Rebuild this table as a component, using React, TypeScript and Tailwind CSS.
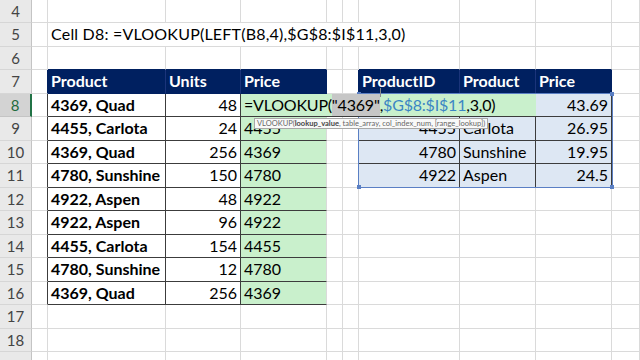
import React from 'react';

// column widths (px): hdr 32 | A 16 | B 118 | C 75 | D 86 | E 16 | F 16 | G 101 | H 76 | I 76 | J rest
const GRID = 'border-r-[#dadada]';
const GRIDB = 'border-b-[#dadada]';
const DARK = 'border-r-[#3c3c3c]';
const DARKB = 'border-b-[#3c3c3c]';

type CellProps = {
  w: string;
  r?: string;
  b?: string;
  bg?: string;
  className?: string;
  children?: React.ReactNode;
};

const Cell: React.FC<CellProps> = ({ w, r = GRID, b = GRIDB, bg = '', className = '', children }) => (
  <div
    className={`${w} ${r} ${b} ${bg} ${className} shrink-0 h-full border-r border-b box-border flex items-center px-[3px] whitespace-nowrap overflow-hidden`}
  >
    {children}
  </div>
);

const RowHead: React.FC<{ n?: number; active?: boolean }> = ({ n, active }) =>
  active ? (
    <div className="w-[32px] shrink-0 h-full box-border border-r-2 border-r-[#217346] border-b border-b-[#c4c4c4] bg-[#d3d3d3] flex items-center justify-center text-[15px] text-[#1f6b3c]">
      {n}
    </div>
  ) : (
    <div className="w-[32px] shrink-0 h-full box-border border-r border-r-[#c4c4c4] border-b border-b-[#d6d6d6] bg-[#e9e9e9] flex items-center justify-center text-[15px] text-[#444]">
      {n}
    </div>
  );

const Row: React.FC<{ h?: string; children: React.ReactNode }> = ({ h = 'h-[23.5px]', children }) => (
  <div className={`${h} flex shrink-0`}>{children}</div>
);

const EmptyRest: React.FC<{ from: 'E' | 'H' }> = ({ from }) => (
  <>
    {from === 'E' && (
      <>
        <Cell w="w-[16px]" />
        <Cell w="w-[16px]" />
        <Cell w="w-[101px]" />
      </>
    )}
    <Cell w="w-[76px]" />
    <Cell w="w-[76px]" />
    <Cell w="flex-1" />
  </>
);

type LeftRow = { n: number; product: string; units: number; price: string };

const leftRows: LeftRow[] = [
  { n: 9, product: '4455, Carlota', units: 24, price: '4455' },
  { n: 10, product: '4369, Quad', units: 256, price: '4369' },
  { n: 11, product: '4780, Sunshine', units: 150, price: '4780' },
  { n: 12, product: '4922, Aspen', units: 48, price: '4922' },
  { n: 13, product: '4922, Aspen', units: 96, price: '4922' },
  { n: 14, product: '4455, Carlota', units: 154, price: '4455' },
  { n: 15, product: '4780, Sunshine', units: 12, price: '4780' },
  { n: 16, product: '4369, Quad', units: 256, price: '4369' },
];

const lookup: Record<number, [string, string, string]> = {
  9: ['4455', 'Carlota', '26.95'],
  10: ['4780', 'Sunshine', '19.95'],
  11: ['4922', 'Aspen', '24.5'],
};

const GREEN = 'bg-[#c9f0cc]';
const BLUE = 'bg-[#dde7f3]';

export default function App() {
  return (
    <div className="relative w-[640px] h-[360px] overflow-hidden bg-white text-[16px] text-black" style={{ fontFamily: 'Lato, "Liberation Sans", sans-serif' }}>
      <div className="flex flex-col">
        {/* row 4 */}
        <Row h="h-[23px]">
          <RowHead n={4} />
          <Cell w="w-[16px]" />
          <Cell w="w-[118px]" />
          <Cell w="w-[75px]" />
          <Cell w="w-[86px]" />
          <EmptyRest from="E" />
        </Row>

        {/* row 5 */}
        <Row>
          <RowHead n={5} />
          <Cell w="w-[16px]" />
          <Cell w="w-[412px]" className="overflow-visible tracking-[0.2px]">
            Cell D8: =VLOOKUP(LEFT(B8,4),$G$8:$I$11,3,0)
          </Cell>
          <EmptyRest from="H" />
        </Row>

        {/* row 6 */}
        <Row>
          <RowHead n={6} />
          <Cell w="w-[16px]" />
          <Cell w="w-[118px]" b="border-b-[#002060]" />
          <Cell w="w-[75px]" b="border-b-[#002060]" />
          <Cell w="w-[86px]" b="border-b-[#002060]" />
          <Cell w="w-[16px]" />
          <Cell w="w-[16px]" />
          <Cell w="w-[101px]" b="border-b-[#002060]" />
          <Cell w="w-[76px]" b="border-b-[#002060]" />
          <Cell w="w-[76px]" b="border-b-[#002060]" />
          <Cell w="flex-1" />
        </Row>

        {/* row 7: headers */}
        <Row>
          <RowHead n={7} />
          <Cell w="w-[16px]" r="border-r-[#002060]" />
          <Cell w="w-[118px]" r="border-r-[#1b347a]" b="border-b-[#002060]" bg="bg-[#002060]" className="font-bold text-white">
            Product
          </Cell>
          <Cell w="w-[75px]" r="border-r-[#1b347a]" b="border-b-[#002060]" bg="bg-[#002060]" className="font-bold text-white">
            Units
          </Cell>
          <Cell w="w-[86px]" r="border-r-[#002060]" b="border-b-[#002060]" bg="bg-[#002060]" className="font-bold text-white">
            Price
          </Cell>
          <Cell w="w-[16px]" />
          <Cell w="w-[16px]" r="border-r-[#002060]" />
          <Cell w="w-[101px]" r="border-r-[#1b347a]" b="border-b-[#002060]" bg="bg-[#002060]" className="font-bold text-white">
            ProductID
          </Cell>
          <Cell w="w-[76px]" r="border-r-[#1b347a]" b="border-b-[#002060]" bg="bg-[#002060]" className="font-bold text-white">
            Product
          </Cell>
          <Cell w="w-[76px]" r="border-r-[#002060]" b="border-b-[#002060]" bg="bg-[#002060]" className="font-bold text-white">
            Price
          </Cell>
          <Cell w="flex-1" />
        </Row>

        {/* row 8: cell D8 in edit mode, text spills over E8:H8 */}
        <Row>
          <RowHead n={8} active />
          <Cell w="w-[16px]" r={DARK} />
          <Cell w="w-[118px]" r={DARK} b={DARKB} className="font-bold">
            4369, Quad
          </Cell>
          <Cell w="w-[75px]" r={DARK} b={DARKB} className="justify-end">
            48
          </Cell>
          <div className="relative z-10 w-[295px] shrink-0 h-full box-border border-b border-b-[#3c3c3c] bg-[#c9f0cc] flex items-center pl-[3px] whitespace-nowrap tracking-[-0.2px]">
            <span>=VLOOKUP(</span>
            <span className="bg-[#c6c6c6] self-stretch flex items-center">"4369"</span>
            <span>,</span>
            <span className="text-[#3b86c4]">$G$8:$I$11</span>
            <span>,3,0)</span>
          </div>
          <Cell w="w-[76px]" r={DARK} b={DARKB} bg={BLUE} className="justify-end">
            43.69
          </Cell>
          <Cell w="flex-1" />
        </Row>

        {leftRows.map((row) => {
          const right = lookup[row.n];
          return (
            <Row key={row.n}>
              <RowHead n={row.n} />
              <Cell w="w-[16px]" r={DARK} />
              <Cell w="w-[118px]" r={DARK} b={DARKB} className="font-bold">
                {row.product}
              </Cell>
              <Cell w="w-[75px]" r={DARK} b={DARKB} className="justify-end">
                {row.units}
              </Cell>
              <Cell w="w-[86px]" b={DARKB} bg={GREEN}>
                {row.price}
              </Cell>
              <Cell w="w-[16px]" />
              {right ? (
                <>
                  <Cell w="w-[16px]" r={DARK} />
                  <Cell w="w-[101px]" r={DARK} b={DARKB} bg={BLUE} className="justify-end">
                    {right[0]}
                  </Cell>
                  <Cell w="w-[76px]" r={DARK} b={DARKB} bg={BLUE}>
                    {right[1]}
                  </Cell>
                  <Cell w="w-[76px]" r={DARK} b={DARKB} bg={BLUE} className="justify-end">
                    {right[2]}
                  </Cell>
                  <Cell w="flex-1" />
                </>
              ) : (
                <>
                  <Cell w="w-[16px]" />
                  <Cell w="w-[101px]" />
                  <Cell w="w-[76px]" />
                  <Cell w="w-[76px]" />
                  <Cell w="flex-1" />
                </>
              )}
            </Row>
          );
        })}

        {[17, 18, undefined].map((n, i) => (
          <Row key={i}>
            <RowHead n={n} />
            <Cell w="w-[16px]" />
            <Cell w="w-[118px]" />
            <Cell w="w-[75px]" />
            <Cell w="w-[86px]" />
            <EmptyRest from="E" />
          </Row>
        ))}
      </div>

      {/* range reference outline for $G$8:$I$11 */}
      <div className="absolute left-[358px] top-[93px] w-[255px] h-[95px] border border-[#5a7fc4] pointer-events-none">
        <div className="absolute -left-[2px] -top-[2px] w-[4px] h-[4px] bg-[#5a7fc4]" />
        <div className="absolute -right-[2px] -top-[2px] w-[4px] h-[4px] bg-[#5a7fc4]" />
        <div className="absolute -left-[2px] -bottom-[2px] w-[4px] h-[4px] bg-[#5a7fc4]" />
        <div className="absolute -right-[2px] -bottom-[2px] w-[4px] h-[4px] bg-[#5a7fc4]" />
      </div>

      {/* text cursor */}
      <div className="absolute z-20 left-[380px] top-[88px] w-px h-[9px] bg-[#8a8a8a]" />

      {/* function argument tooltip */}
      <div className="absolute z-20 left-[254px] top-[118px] h-[11px] px-[2px] bg-[#f9f9f9] border border-[#a8a8a8] flex items-center text-[7.5px] leading-none text-[#666] whitespace-nowrap">
        VLOOKUP(<span className="font-bold text-[#444]">lookup_value</span>, table_array, col_index_num, [range_lookup])
      </div>
    </div>
  );
}
